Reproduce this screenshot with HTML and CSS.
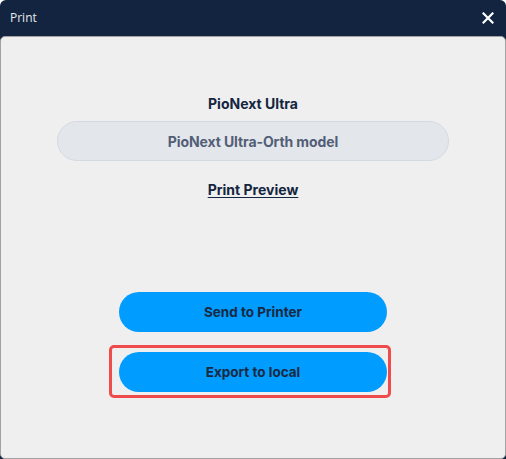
FILE: index.html
```html
<!DOCTYPE html>
<html>
<head>
<meta charset="utf-8">
<link rel="stylesheet" href="styles.css">
</head>
<body>
<div class="window">
  <div class="titlebar">
    <span class="title">Print</span>
    <button class="close" aria-label="Close">
      <svg width="12" height="12" viewBox="0 0 12 12"><path d="M1.5 1.5 L10.5 10.5 M10.5 1.5 L1.5 10.5" stroke="#ffffff" stroke-width="2.2" stroke-linecap="square"/></svg>
    </button>
  </div>
  <div class="content">
    <div class="heading">PioNext Ultra</div>
    <div class="pill">PioNext Ultra-Orth model</div>
    <a class="preview" href="#">Print Preview</a>
    <div class="actions">
      <button class="btn">Send to Printer</button>
      <div class="highlight-wrap">
        <button class="btn">Export to local</button>
        <div class="highlight"></div>
      </div>
    </div>
  </div>
</div>
</body>
</html>
```

FILE: styles.css
```css
* { box-sizing: border-box; }
html, body { margin: 0; padding: 0; }
body {
  background: #ffffff;
  width: 506px;
  height: 459px;
  overflow: hidden;
}
.window {
  width: 506px;
  height: 459px;
  display: flex;
  flex-direction: column;
  background: #12243f;
  border-radius: 6px 6px 0 0;
}
.titlebar {
  height: 36px;
  flex: none;
  display: flex;
  align-items: center;
  justify-content: space-between;
  padding: 0 10px 0 10px;
}
.title {
  font-family: "Open Sans", "Noto Sans", sans-serif;
  font-size: 12px;
  color: #e6e9ee;
  margin-top: -1px;
}
.close {
  border: 0;
  background: none;
  padding: 0;
  width: 12px;
  height: 12px;
  display: flex;
  margin-right: 2px;
  margin-top: -1px;
}
.content {
  flex: 1;
  background: #efefef;
  border: 1px solid #a2a2a2;
  border-radius: 5px;
  display: flex;
  flex-direction: column;
  align-items: center;
  padding-top: 57px;
  font-family: Inter, "Noto Sans", sans-serif;
}
.heading {
  font-size: 14px;
  font-weight: 700;
  line-height: 20px;
  color: #14253f;
}
.pill {
  margin-top: 7px;
  width: 392px;
  height: 40px;
  border-radius: 20px;
  background: #e3e6ea;
  border: 1px solid #d4dae3;
  display: flex;
  align-items: center;
  justify-content: center;
  font-size: 14px;
  font-weight: 700;
  letter-spacing: -0.1px;
  color: #525e77;
}
.preview {
  margin-top: 19px;
  font-size: 14px;
  font-weight: 700;
  line-height: 20px;
  color: #14253f;
  text-decoration: underline;
  text-underline-offset: 2px;
}
.actions {
  margin-top: 92px;
  display: flex;
  flex-direction: column;
  align-items: center;
  gap: 20px;
}
.btn {
  width: 268px;
  height: 40px;
  border: 0;
  border-radius: 20px;
  background: #009cff;
  font-family: Inter, "Noto Sans", sans-serif;
  font-size: 13.5px;
  font-weight: 700;
  color: #1a2942;
  display: flex;
  align-items: center;
  justify-content: center;
}
.highlight-wrap {
  position: relative;
}
.highlight {
  position: absolute;
  left: -10px;
  right: -4px;
  top: -7px;
  bottom: -6px;
  border: 3px solid #f04b4b;
  border-radius: 5px;
  pointer-events: none;
}
```
